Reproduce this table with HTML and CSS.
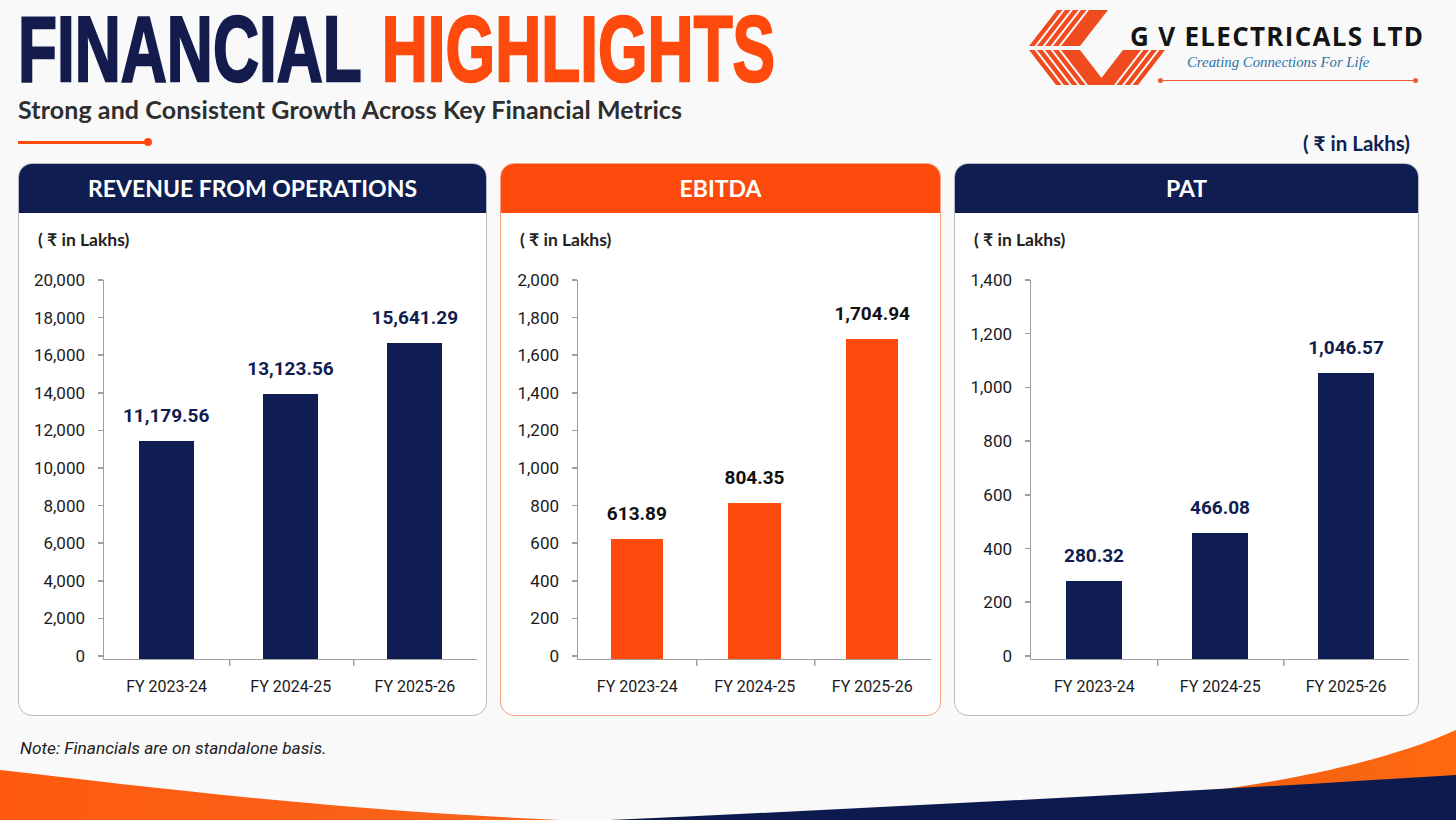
FILE: index.html
```html
<!DOCTYPE html>
<html lang="en">
<head>
<meta charset="utf-8">
<title>Financial Highlights</title>
<link rel="stylesheet" href="styles.css">
</head>
<body>
<div class="slide">
  <header class="top">
    <div class="titles">
      <h1 class="title"><span class="t-navy">FINANCIAL</span> <span class="t-orange">HIGHLIGHTS</span></h1>
      <p class="subtitle">Strong and Consistent Growth Across Key Financial Metrics</p>
      <div class="accent"><span class="accent-line"></span><span class="accent-dot"></span></div>
    </div>
    <div class="brand">
      <div class="logo-row">
        <svg class="logo" viewBox="0 0 142 80" aria-hidden="true">
          <g fill="#ef4b1e">
            <polygon points="29,2 34.5,2 6.5,38 1,38"/>
            <polygon points="37,2 42.5,2 14.5,38 9,38"/>
            <polygon points="45,2 50.5,2 22.5,38 17,38"/>
            <polygon points="53,2 58.5,2 30.5,38 25,38"/>
            <polygon points="61,2 80,2 52,38 33,38"/>
            <polygon points="1,42 6.5,42 33.5,77 28,77"/>
            <polygon points="9,42 14.5,42 41.5,77 36,77"/>
            <polygon points="17,42 22.5,42 49.5,77 44,77"/>
            <polygon points="25,42 30.5,42 57.5,77 52,77"/>
            <polygon points="33,42 52,42 79,77 60,77"/>
            <polygon points="68,77 86,77 113,42 95,42"/>
            <polygon points="88.5,77 94,77 121,42 115.5,42"/>
            <polygon points="96.5,77 102,77 129,42 123.5,42"/>
            <polygon points="104.5,77 110,77 137,42 131.5,42"/>
          </g>
        </svg>
        <div class="brand-text">
          <div class="brand-name">G V ELECTRICALS LTD</div>
          <div class="tagline">Creating Connections For Life</div>
          <div class="brand-rule"><span class="dot"></span><span class="rule-line"></span><span class="dot"></span></div>
        </div>
      </div>
      <div class="unit">( ₹ in Lakhs)</div>
    </div>
  </header>

  <main class="cards">
    <section class="card card-rev">
      <h2 class="card-head">REVENUE FROM OPERATIONS</h2>
      <div class="card-body">
        <div class="card-unit">( ₹ in Lakhs)</div>
        <div class="chart">
          <div class="yaxis">
            <span>20,000</span><span>18,000</span><span>16,000</span><span>14,000</span><span>12,000</span><span>10,000</span><span>8,000</span><span>6,000</span><span>4,000</span><span>2,000</span><span>0</span>
          </div>
          <div class="plot">
            <div class="band"><div class="value">11,179.56</div><div class="bar" style="height:218px"></div></div>
            <div class="band"><div class="value">13,123.56</div><div class="bar" style="height:265px"></div></div>
            <div class="band"><div class="value">15,641.29</div><div class="bar" style="height:316px"></div></div>
          </div>
          <div class="xlabels"><span>FY 2023-24</span><span>FY 2024-25</span><span>FY 2025-26</span></div>
        </div>
      </div>
    </section>

    <section class="card card-orange">
      <h2 class="card-head">EBITDA</h2>
      <div class="card-body">
        <div class="card-unit">( ₹ in Lakhs)</div>
        <div class="chart">
          <div class="yaxis">
            <span>2,000</span><span>1,800</span><span>1,600</span><span>1,400</span><span>1,200</span><span>1,000</span><span>800</span><span>600</span><span>400</span><span>200</span><span>0</span>
          </div>
          <div class="plot">
            <div class="band"><div class="value">613.89</div><div class="bar" style="height:120px"></div></div>
            <div class="band"><div class="value">804.35</div><div class="bar" style="height:156px"></div></div>
            <div class="band"><div class="value">1,704.94</div><div class="bar" style="height:320px"></div></div>
          </div>
          <div class="xlabels"><span>FY 2023-24</span><span>FY 2024-25</span><span>FY 2025-26</span></div>
        </div>
      </div>
    </section>

    <section class="card card-pat">
      <h2 class="card-head">PAT</h2>
      <div class="card-body">
        <div class="card-unit">( ₹ in Lakhs)</div>
        <div class="chart">
          <div class="yaxis">
            <span>1,400</span><span>1,200</span><span>1,000</span><span>800</span><span>600</span><span>400</span><span>200</span><span>0</span>
          </div>
          <div class="plot">
            <div class="band"><div class="value">280.32</div><div class="bar" style="height:78px"></div></div>
            <div class="band"><div class="value">466.08</div><div class="bar" style="height:126px"></div></div>
            <div class="band"><div class="value">1,046.57</div><div class="bar" style="height:286px"></div></div>
          </div>
          <div class="xlabels"><span>FY 2023-24</span><span>FY 2024-25</span><span>FY 2025-26</span></div>
        </div>
      </div>
    </section>
  </main>

  <p class="note">Note: Financials are on standalone basis.</p>

  <svg class="wave" viewBox="0 0 1456 95" preserveAspectRatio="none" aria-hidden="true">
    <defs>
      <linearGradient id="wl" x1="0" y1="0" x2="1" y2="0">
        <stop offset="0" stop-color="#ff5a0e"/>
        <stop offset="1" stop-color="#f7641e"/>
      </linearGradient>
      <linearGradient id="wr" x1="0" y1="0" x2="1" y2="0">
        <stop offset="0" stop-color="#d9480f"/>
        <stop offset="1" stop-color="#ff6a10"/>
      </linearGradient>
    </defs>
    <path d="M0,45 C150,62 330,85 560,95 L0,95 Z" fill="url(#wl)"/>
    <path d="M820,95 C1100,86 1330,62 1456,5 L1456,95 Z" fill="url(#wr)"/>
    <path d="M610,95 C900,82 1200,66 1456,50 L1456,95 Z" fill="#0c1a4e"/>
  </svg>
</div>
</body>
</html>
```

FILE: styles.css
```css
html, body {
  margin: 0;
  padding: 0;
}

body {
  background: #f9f9f9;
}

.slide {
  position: relative;
  width: 1456px;
  height: 820px;
  overflow: hidden;
  background: #f9f9f9;
  font-family: "Lato", "Noto Sans", sans-serif;
}

/* ---------- header ---------- */
.top {
  display: flex;
  justify-content: space-between;
  height: 163px;
  padding-left: 18px;
  box-sizing: border-box;
}

.titles {
  flex: 1 1 auto;
  min-width: 0;
  padding-top: 4px;
}

.title {
  margin: 0;
  font-family: "Liberation Sans", "Noto Sans", sans-serif;
  font-weight: 700;
  font-size: 93px;
  line-height: 90px;
  height: 90px;
  white-space: nowrap;
  word-spacing: 5px;
  -webkit-text-stroke: 2.4px currentColor;
  transform: scaleX(0.686);
  transform-origin: 0 0;
}

.t-navy {
  color: #141b4d;
}

.t-orange {
  color: #fe4a0c;
}

.subtitle {
  margin: 1px 0 0;
  font-size: 25px;
  line-height: 28px;
  font-weight: 700;
  letter-spacing: 0.1px;
  color: #2e2e2e;
  white-space: nowrap;
}

.accent {
  display: flex;
  align-items: center;
  margin-top: 15px;
  height: 8px;
}

.accent-line {
  width: 128px;
  height: 3px;
  background: #fe4a0c;
}

.accent-dot {
  width: 8px;
  height: 8px;
  border-radius: 50%;
  background: #fe4a0c;
  margin-left: -2px;
}

/* ---------- brand ---------- */
.brand {
  flex: none;
  display: flex;
  flex-direction: column;
  align-items: flex-end;
  padding-right: 33px;
}

.logo-row {
  display: flex;
  align-items: flex-start;
}

.logo {
  flex: none;
  width: 142px;
  height: 80px;
  margin-top: 8px;
  margin-right: -40px;
}

.brand-text {
  width: 293px;
  padding-top: 21px;
}

.brand-name {
  font-family: "Open Sans", "Liberation Sans", sans-serif;
  font-weight: 700;
  font-size: 26px;
  line-height: 30px;
  letter-spacing: 1.3px;
  color: #141414;
  white-space: nowrap;
}

.tagline {
  font-family: "Liberation Serif", serif;
  font-style: italic;
  font-size: 14.8px;
  line-height: 18px;
  color: #2c72a8;
  padding-left: 57px;
  margin-top: 2px;
  white-space: nowrap;
}

.brand-rule {
  display: flex;
  align-items: center;
  margin: 7px 5px 0 28px;
}

.rule-line {
  flex: 1;
  height: 1.5px;
  background: #ef5a2a;
}

.dot {
  width: 5px;
  height: 5px;
  border-radius: 50%;
  background: #ef5a2a;
}

.unit {
  font-weight: 700;
  font-size: 20.5px;
  line-height: 24px;
  color: #101d50;
  margin-top: 43px;
  margin-right: 13px;
  white-space: nowrap;
}

/* ---------- cards ---------- */
.cards {
  display: grid;
  grid-template-columns: 469px 441px 465px;
  column-gap: 13px;
  padding-left: 18px;
  height: 553px;
}

.card {
  background: #fff;
  border: 1px solid #b8bac6;
  border-radius: 14px;
  overflow: hidden;
  display: flex;
  flex-direction: column;
  --yw: 75px;
}

.card-rev {
  --yw: 84px;
}

.card-orange {
  border-color: #f5a182;
  --yw: 76px;
}

.card-head {
  margin: 0;
  height: 49px;
  line-height: 49px;
  text-align: center;
  color: #fff;
  font-size: 23px;
  font-weight: 700;
  background: #101d50;
}

.card-orange .card-head {
  background: #fe4a0c;
}

.card-body {
  padding: 17px 9px 0 0;
}

.card-unit {
  padding-left: 19px;
  font-size: 17.5px;
  line-height: 20px;
  font-weight: 700;
  color: #222;
}

.chart {
  display: grid;
  grid-template-columns: var(--yw) 1fr;
  grid-template-rows: 379.5px auto;
  margin-top: 30px;
}

.yaxis {
  height: 376px;
  display: flex;
  flex-direction: column;
  justify-content: space-between;
  font-family: "Roboto", "Liberation Sans", sans-serif;
  font-size: 17px;
  color: #1a1a1a;
}

.yaxis span {
  height: 0;
  display: flex;
  align-items: center;
  justify-content: flex-end;
  white-space: nowrap;
}

.yaxis span::after {
  content: "";
  width: 5px;
  height: 1.5px;
  background: #a0a0a0;
  margin-left: 13px;
}

.plot {
  display: flex;
  border-left: 1.5px solid #a0a0a0;
  border-bottom: 1.5px solid #a0a0a0;
  box-sizing: border-box;
}

.band {
  flex: 1;
  display: flex;
  flex-direction: column;
  align-items: center;
  justify-content: flex-end;
}

.value {
  font-family: "Roboto", "Liberation Sans", sans-serif;
  font-weight: 700;
  font-size: 19px;
  line-height: 22px;
  color: #101d50;
  margin-bottom: 14px;
  white-space: nowrap;
}

.card-orange .value {
  color: #111;
}

.bar {
  width: 44.5%;
  background: #0f1d52;
}

.card-orange .bar {
  background: #fe4a0c;
}

.xlabels {
  grid-column: 2;
  display: flex;
  padding-left: 1.5px;
}

.xlabels span {
  flex: 1;
  text-align: center;
  font-family: "Roboto", "Liberation Sans", sans-serif;
  font-size: 16px;
  line-height: 20px;
  padding-top: 17px;
  color: #1a1a1a;
  white-space: nowrap;
}

.xlabels span + span {
  background: linear-gradient(#a0a0a0, #a0a0a0) 0 0 / 1.5px 6px no-repeat;
}

/* ---------- footer ---------- */
.note {
  margin: 22px 0 0 20px;
  font-family: "Roboto", "Liberation Sans", sans-serif;
  font-style: italic;
  font-size: 17.3px;
  line-height: 20px;
  color: #222;
}

.wave {
  position: absolute;
  left: 0;
  bottom: 0;
  width: 1456px;
  height: 95px;
}
```
